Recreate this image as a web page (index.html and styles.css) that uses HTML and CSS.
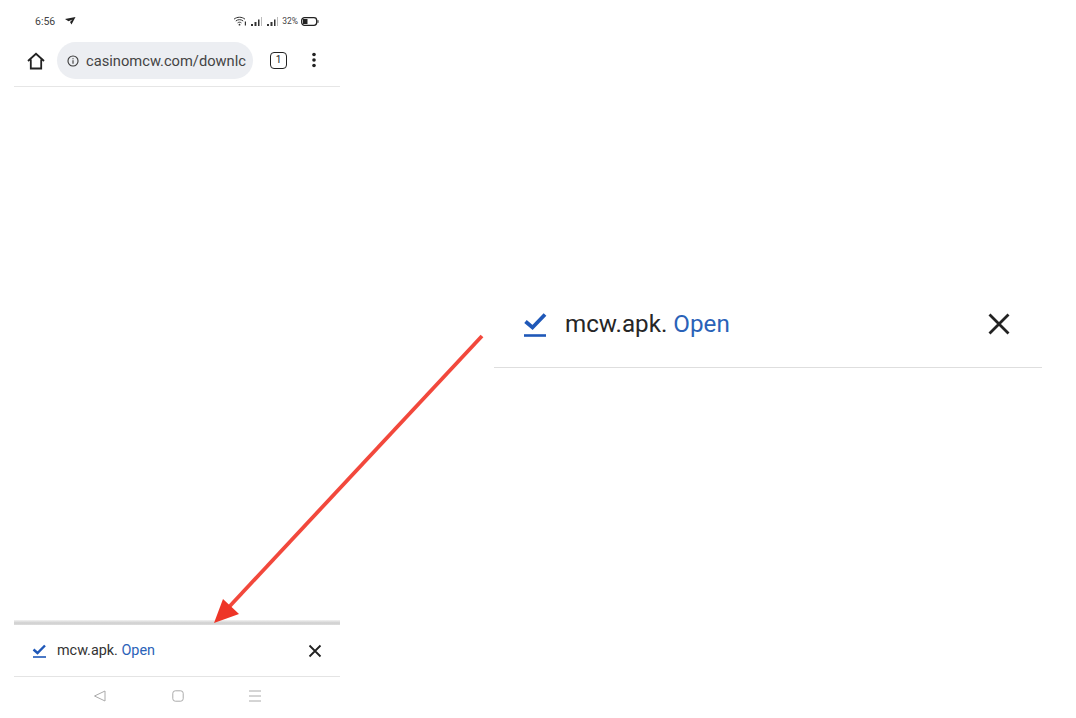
FILE: index.html
```html
<!DOCTYPE html>
<html lang="en">
<head>
<meta charset="utf-8">
<title>mcw.apk download</title>
<link rel="stylesheet" href="styles.css">
</head>
<body>
<main class="page">
  <section class="phone">
    <div class="status">
      <div class="status-left">
        <span class="time">6:56</span>
        <svg class="send" width="11" height="8" viewBox="0 0 11 8"><path d="M0 2 10.500 0 6.500 7.500 5 5 7.500 2.500 3.500 4.300Z" fill="#222"/></svg>
      </div>
      <div class="status-right">
        <svg width="14" height="10" viewBox="0 0 14 10" fill="none" stroke="#333"><path d="M1 3.200C4 .6 9 .6 12 3.200M2.800 5C5 3.200 8 3.200 10.200 5M4.600 6.900C5.600 6 7.400 6 8.400 6.900"/><circle cx="6.500" cy="8.700" r=".9" fill="#333" stroke="none"/><path d="M12.400 5.500v4" stroke-width="1.200"/></svg>
        <svg class="signal" width="13" height="9" viewBox="0 0 13 9"><path d="M1 7h2v2H1zM4.500 5h2v4h-2zM8 2.500h1.500V9H8z" fill="#333"/><path d="M11.500 0v9" stroke="#bbb"/></svg>
        <svg class="signal" width="13" height="9" viewBox="0 0 13 9"><path d="M1 7h2v2H1zM4.500 5h2v4h-2zM8 2.500h1.500V9H8z" fill="#333"/><path d="M11.500 0v9" stroke="#bbb"/></svg>
        <span class="pct">32%</span>
        <svg width="18" height="9" viewBox="0 0 18 9"><rect x=".7" y=".7" width="15" height="7.600" rx="2.800" fill="#fff" stroke="#222" stroke-width="1.300"/><path d="M2 2h4.500v5H2z" fill="#222"/><path d="M17 3.200v2.600" stroke="#222"/></svg>
      </div>
    </div>
    <div class="toolbar">
      <svg class="home" width="20" height="20" viewBox="0 0 20 20" fill="none" stroke="#222" stroke-width="1.800" stroke-linejoin="miter"><path d="M2 10 10 2.800 18 10M4.800 8.500V17.500H15.200V8.500"/></svg>
      <div class="omnibox">
        <svg width="16" height="16" viewBox="0 0 16 16" fill="none" stroke="#3c3c3c" stroke-width="1.500"><circle cx="8" cy="8" r="6.700"/><path d="M8 7v4.500M8 4.300v1.500"/></svg>
        <span class="url">casinomcw.com/downlc</span>
      </div>
      <div class="tabs">1</div>
      <svg class="menu" width="4" height="16" viewBox="0 0 4 16" fill="#222"><circle cx="2" cy="2.500" r="1.800"/><circle cx="2" cy="8" r="1.800"/><circle cx="2" cy="13.500" r="1.800"/></svg>
    </div>
    <div class="content"></div>
    <div class="shade"></div>
    <div class="download">
      <svg class="check" width="15" height="14" viewBox="0 0 15 14" fill="none" stroke="#1f58b8"><path d="M1.500 5.500 5.500 9 13 1.500" stroke-width="2.400"/><path d="M1 13h13" stroke-width="1.600"/></svg>
      <span class="file">mcw.apk. <span class="open">Open</span></span>
      <svg class="close" width="14" height="14" viewBox="0 0 14 14" stroke="#222" stroke-width="1.800"><path d="M1.500 1.500 12.500 12.500M12.500 1.500 1.500 12.500"/></svg>
    </div>
    <nav class="nav">
      <svg width="14" height="12" viewBox="0 0 14 12" fill="none" stroke="#aaa"><path d="M12 1 1.500 6 12 11Z"/></svg>
      <svg width="12" height="12" viewBox="0 0 12 12" fill="none" stroke="#aaa"><rect x=".8" y=".8" width="10.400" height="10.400" rx="2.500"/></svg>
      <svg width="12" height="12" viewBox="0 0 12 12" fill="none" stroke="#aaa"><path d="M0 1h12M0 6h12M0 11h12"/></svg>
    </nav>
  </section>
  <section class="detail">
    <div class="detail-row">
      <svg class="detail-check" width="24" height="26" viewBox="0 0 24 26" fill="none" stroke="#1f58b8"><path d="M2.500 10.500 9.500 16.500 22 3.500" stroke-width="3.800"/><path d="M1 24.500h22" stroke-width="2.600"/></svg>
      <span class="detail-file">mcw.apk. <span class="open">Open</span></span>
      <svg class="detail-close" width="24" height="24" viewBox="0 0 24 24" stroke="#222" stroke-width="2.800"><path d="M2.500 2.500 21.500 21.500M21.500 2.500 2.500 21.500"/></svg>
    </div>
  </section>
  <svg class="arrow" width="1076" height="718" viewBox="0 0 1076 718"><path d="M482 336 229 607" stroke="#f2483c" stroke-width="3.800" fill="none"/><path d="M214 623 223 599 239 614Z" fill="#ee3527"/></svg>
</main>
</body>
</html>
```
FILE: styles.css
```css
* { box-sizing: border-box; }
html, body { margin: 0; height: 718px; overflow: hidden; background: #fff; }
body { font-family: Roboto, "Liberation Sans", sans-serif; color: #2a2a2a; }
.page { position: relative; display: flex; height: 718px; padding-left: 14px; }
.phone { width: 326px; height: 718px; display: flex; flex-direction: column; flex: none; }
.status { height: 42px; padding: 15px 21px 0 21px; display: flex; justify-content: space-between; align-items: flex-start; }
.status-left { display: flex; align-items: center; gap: 10px; height: 12px; }
.time { font-size: 10.500px; color: #444; }
.status-right { display: flex; align-items: center; gap: 3px; height: 12px; }
.pct { font-size: 8.500px; color: #444; }
.toolbar { height: 45px; display: flex; align-items: flex-start; border-bottom: 1px solid #e6e6e6; }
.home { margin: 9px 11px 0 12px; }
.omnibox { width: 196px; height: 37px; border-radius: 19px; background: #eceef2; display: flex; align-items: center; padding: 0 7px 0 10px; gap: 7px; overflow: hidden; }
.url { font-size: 14.700px; color: #444; white-space: nowrap; flex: 1; }
.tabs { width: 17px; height: 17px; margin: 10px 0 0 17px; border: 1.800px solid #222; border-radius: 4px; font-size: 10px; line-height: 13px; text-align: center; color: #222; }
.menu { margin: 10px 0 0 25px; }
.content { flex: 1; }
.shade { height: 5px; background: linear-gradient(#f2f2f2, #cfcfcf 60%, #dedede); }
.download { height: 52px; padding: 0 0 0 18px; display: flex; align-items: center; border-bottom: 1px solid #e4e4e4; }
.check { flex: none; }
.file { font-size: 14.400px; margin-left: 10px; color: #333; flex: 1; }
.open { color: #2a62b8; }
.close { margin-right: 18px; }
.nav { height: 41px; padding: 0 79px 3px 79px; display: flex; justify-content: space-between; align-items: center; }
.detail { margin-left: 154px; width: 548px; height: 368px; flex: none; }
.detail-row { height: 368px; padding: 300px 31px 20px 29px; display: flex; align-items: center; border-bottom: 1px solid #dedede; }
.detail-file { font-size: 24.200px; margin-left: 18px; flex: 1; color: #262626; }
.arrow { position: absolute; left: 0; top: 0; pointer-events: none; }
```
